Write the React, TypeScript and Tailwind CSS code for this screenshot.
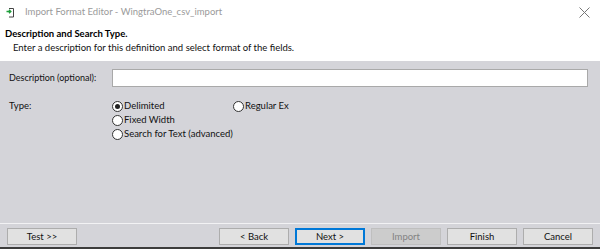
import React from "react";

function Radio({ label, checked = false }: { label: string; checked?: boolean }) {
  return (
    <div className="flex h-[14px] items-center">
      <span className="flex h-[11px] w-[11px] shrink-0 items-center justify-center rounded-full border border-[#333] bg-white">
        {checked && <span className="h-[5px] w-[5px] rounded-full bg-[#222]" />}
      </span>
      <span className="ml-[1px] whitespace-nowrap text-[9.5px] leading-none text-[#111]">{label}</span>
    </div>
  );
}

function Btn({ children, primary = false, disabled = false, className = "" }: { children: React.ReactNode; primary?: boolean; disabled?: boolean; className?: string }) {
  const tone = disabled
    ? "border-[#bfbfbf] bg-[#cccccc] text-[#838383]"
    : primary
    ? "border-2 border-[#0078d7] bg-[#e1e1e1] text-[#111]"
    : "border-[#adadad] bg-[#e1e1e1] text-[#111]";
  return (
    <div className={`flex h-[17px] w-[70px] items-center justify-center border text-[9.5px] leading-none ${tone} ${className}`}>
      {children}
    </div>
  );
}

export default function App() {
  return (
    <div className="flex h-[249px] w-[600px] flex-col overflow-hidden bg-white font-['Lato','Open_Sans',sans-serif]">
      {/* Title bar */}
      <div className="flex h-[24px] shrink-0 items-center">
        <svg width="9" height="11" viewBox="0 0 9 11" className="ml-[6px]">
          <path d="M3 1.5h4.5v8.5h-4.5" fill="none" stroke="#444" strokeWidth="1" />
          <path d="M0.5 4.5h4M3 2.8l1.8 1.7L3 6.2" fill="none" stroke="#1e9e3a" strokeWidth="1.4" />
        </svg>
        <span className="ml-[10px] text-[9.5px] text-[#9a9a9a]">Import Format Editor - WingtraOne_csv_import</span>
        <svg width="11" height="11" viewBox="0 0 11 11" className="ml-auto mr-[10px]">
          <path d="M0.5 0.5l10 10M10.5 0.5l-10 10" stroke="#777" strokeWidth="1" />
        </svg>
      </div>

      {/* Header */}
      <div className="h-[37px] shrink-0 pl-[5px] pt-[3px]">
        <div className="text-[9.5px] font-bold leading-[13px] text-black">Description and Search Type.</div>
        <div className="ml-[8px] mt-[1px] text-[9.5px] leading-[13px] text-[#111]">
          Enter a description for this definition and select format of the fields.
        </div>
      </div>

      {/* Body */}
      <div className="flex flex-1 flex-col bg-[#d4d4d9]">
        <div className="flex items-center pl-[9px] pr-[12px] pt-[8px]">
          <span className="w-[103px] whitespace-nowrap text-[9px] text-[#111]">Description (optional):</span>
          <div className="h-[18px] flex-1 border border-[#a9a9a9] bg-white" />
        </div>

        <div className="mt-[12px] flex pl-[9px]">
          <span className="w-[103px] text-[9.5px] leading-[14px] text-[#111]">Type:</span>
          <div className="flex w-[121px] flex-col">
            <Radio label="Delimited" checked />
            <Radio label="Fixed Width" />
            <Radio label="Search for Text (advanced)" />
          </div>
          <div>
            <Radio label="Regular Ex" />
          </div>
        </div>

        <div className="mt-auto h-[1px] bg-[#f2f2f4]" />
        <div className="flex h-[23px] items-start px-[7px] pt-[4px]">
          <Btn>Test &gt;&gt;</Btn>
          <Btn className="ml-auto">&lt; Back</Btn>
          <Btn primary className="ml-[6px]">Next &gt;</Btn>
          <Btn disabled className="ml-[6px]">Import</Btn>
          <Btn className="ml-[6px]">Finish</Btn>
          <Btn className="ml-[6px]">Cancel</Btn>
        </div>
      </div>
      <div className="h-[2px] shrink-0 bg-[#3c3c3c]" />
    </div>
  );
}
